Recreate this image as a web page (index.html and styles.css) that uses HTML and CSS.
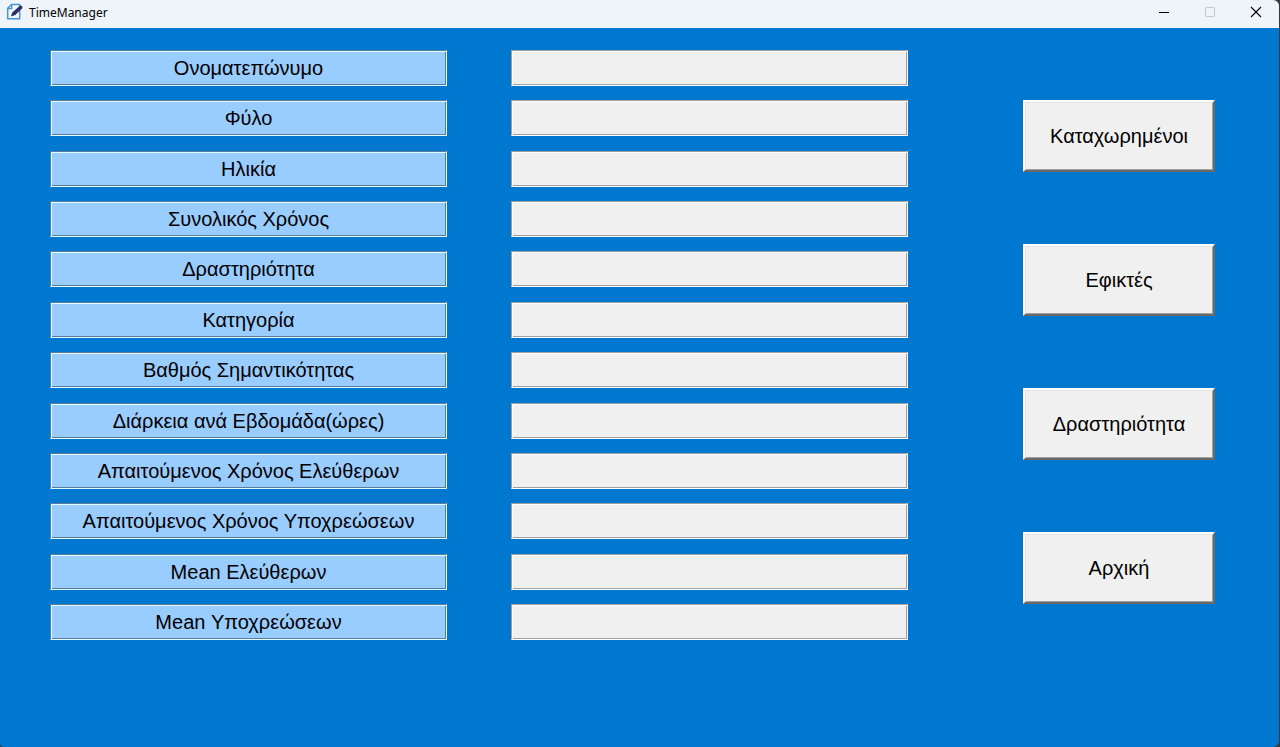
FILE: index.html
```html
<!DOCTYPE html>
<html lang="el">
<head>
<meta charset="utf-8">
<title>TimeManager</title>
<link rel="stylesheet" href="styles.css">
</head>
<body>
<div class="window">
  <header class="titlebar">
    <svg class="app-icon" viewBox="0 0 18 18" aria-hidden="true">
      <path d="M5.5 1.500h8.200v14.300H1.700V5.300z" fill="#f4faff" stroke="#4a94d4" stroke-width="1.500" stroke-linejoin="round"/>
      <path d="M1.700 5.500h4V1.500" fill="none" stroke="#4a94d4" stroke-width="1.300"/>
      <path d="M4.800 13.600l1.500-4.200 7.500-6.700c1-.8 3.500 1.300 2.500 2.500L9.300 12z" fill="#2b2f6b"/>
    </svg>
    <h1 class="title">TimeManager</h1>
    <div class="controls">
      <button class="control" type="button" aria-label="Minimize"><svg viewBox="0 0 12 12"><path d="M1 6.500h10" stroke="#000"/></svg></button>
      <button class="control" type="button" aria-label="Maximize" disabled><svg viewBox="0 0 12 12"><rect x="1.500" y="1.500" width="9" height="9" rx="1" fill="none" stroke="#c3c7cc"/></svg></button>
      <button class="control" type="button" aria-label="Close"><svg viewBox="0 0 12 12"><path d="M1 1l10 10M11 1L1 11" stroke="#000" stroke-width="1.100"/></svg></button>
    </div>
  </header>
  <main class="content">
    <form class="fields">
      <div class="row"><label class="label" for="f1">Ονοματεπώνυμο</label><input class="field" id="f1" type="text" readonly></div>
      <div class="row"><label class="label" for="f2">Φύλο</label><input class="field" id="f2" type="text" readonly></div>
      <div class="row"><label class="label" for="f3">Ηλικία</label><input class="field" id="f3" type="text" readonly></div>
      <div class="row"><label class="label" for="f4">Συνολικός Χρόνος</label><input class="field" id="f4" type="text" readonly></div>
      <div class="row"><label class="label" for="f5">Δραστηριότητα</label><input class="field" id="f5" type="text" readonly></div>
      <div class="row"><label class="label" for="f6">Κατηγορία</label><input class="field" id="f6" type="text" readonly></div>
      <div class="row"><label class="label" for="f7">Βαθμός Σημαντικότητας</label><input class="field" id="f7" type="text" readonly></div>
      <div class="row"><label class="label" for="f8">Διάρκεια ανά Εβδομάδα(ώρες)</label><input class="field" id="f8" type="text" readonly></div>
      <div class="row"><label class="label" for="f9">Απαιτούμενος Χρόνος Ελεύθερων</label><input class="field" id="f9" type="text" readonly></div>
      <div class="row"><label class="label" for="f10">Απαιτούμενος Χρόνος Υποχρεώσεων</label><input class="field" id="f10" type="text" readonly></div>
      <div class="row"><label class="label" for="f11">Mean Ελεύθερων</label><input class="field" id="f11" type="text" readonly></div>
      <div class="row"><label class="label" for="f12">Mean Υποχρεώσεων</label><input class="field" id="f12" type="text" readonly></div>
    </form>
    <nav class="actions">
      <button class="action" type="button">Καταχωρημένοι</button>
      <button class="action" type="button">Εφικτές</button>
      <button class="action" type="button">Δραστηριότητα</button>
      <button class="action" type="button">Αρχική</button>
    </nav>
  </main>
</div>
</body>
</html>
```
FILE: styles.css
```css
* {
  box-sizing: border-box;
}

body {
  margin: 0;
  background: #3a3a3a;
  font-family: "Liberation Sans", Arial, sans-serif;
  color: #000;
}

.window {
  display: flex;
  flex-direction: column;
  min-height: 100vh;
  margin-right: 1px;
  background: #0078d0;
  border-radius: 0 6px 6px 4px;
  overflow: hidden;
}

.titlebar {
  display: flex;
  align-items: center;
  height: 28px;
  padding-left: 6px;
  background: #eef4f9;
}

.app-icon {
  width: 18px;
  height: 18px;
  margin-bottom: 4px;
}

.title {
  flex: 1;
  margin: 0 0 2px 5px;
  font: 400 12px/16px "Noto Sans", "Open Sans", sans-serif;
}

.controls {
  display: flex;
}

.control {
  display: flex;
  align-items: center;
  justify-content: center;
  width: 46px;
  height: 28px;
  padding: 0 0 4px;
  border: 0;
  background: transparent;
}

.control svg {
  width: 12px;
  height: 12px;
}

.content {
  flex: 1;
  display: grid;
  grid-template-columns: 858fr 192fr;
  column-gap: 115px;
  padding: 22px 64px 107px 50px;
}

.fields {
  display: flex;
  flex-direction: column;
  justify-content: space-between;
}

.row {
  display: grid;
  grid-template-columns: 1fr 1fr;
  column-gap: 64px;
}

.label,
.field {
  width: 100%;
  height: 36px;
  border: 1px solid;
  border-radius: 0;
  font: 400 20px/34px "Liberation Sans", Arial, sans-serif;
  text-align: center;
  white-space: nowrap;
}

.label {
  background: #99ccff;
  border-color: #5c7a99 #e0ffff #e0ffff #5c7a99;
  box-shadow: inset 1px 1px #e0ffff, inset -1px -1px #5c7a99;
}

.field {
  padding: 0 8px;
  background: #f0f0f0;
  border-color: #a0a0a0 #fff #fff #a0a0a0;
  box-shadow: inset 1px 1px #fff, inset -1px -1px #a0a0a0;
  outline: 0;
}

.actions {
  display: flex;
  flex-direction: column;
  justify-content: space-between;
  padding: 50px 0 36px;
}

.action {
  height: 72px;
  padding: 0;
  border: 2px solid;
  border-color: #fff #696969 #696969 #fff;
  border-radius: 0;
  background: #f0f0f0;
  box-shadow: inset 1px 1px #e3e3e3, inset -1px -1px #a0a0a0;
  color: #000;
  font: 400 20px/24px "Liberation Sans", Arial, sans-serif;
}
```
